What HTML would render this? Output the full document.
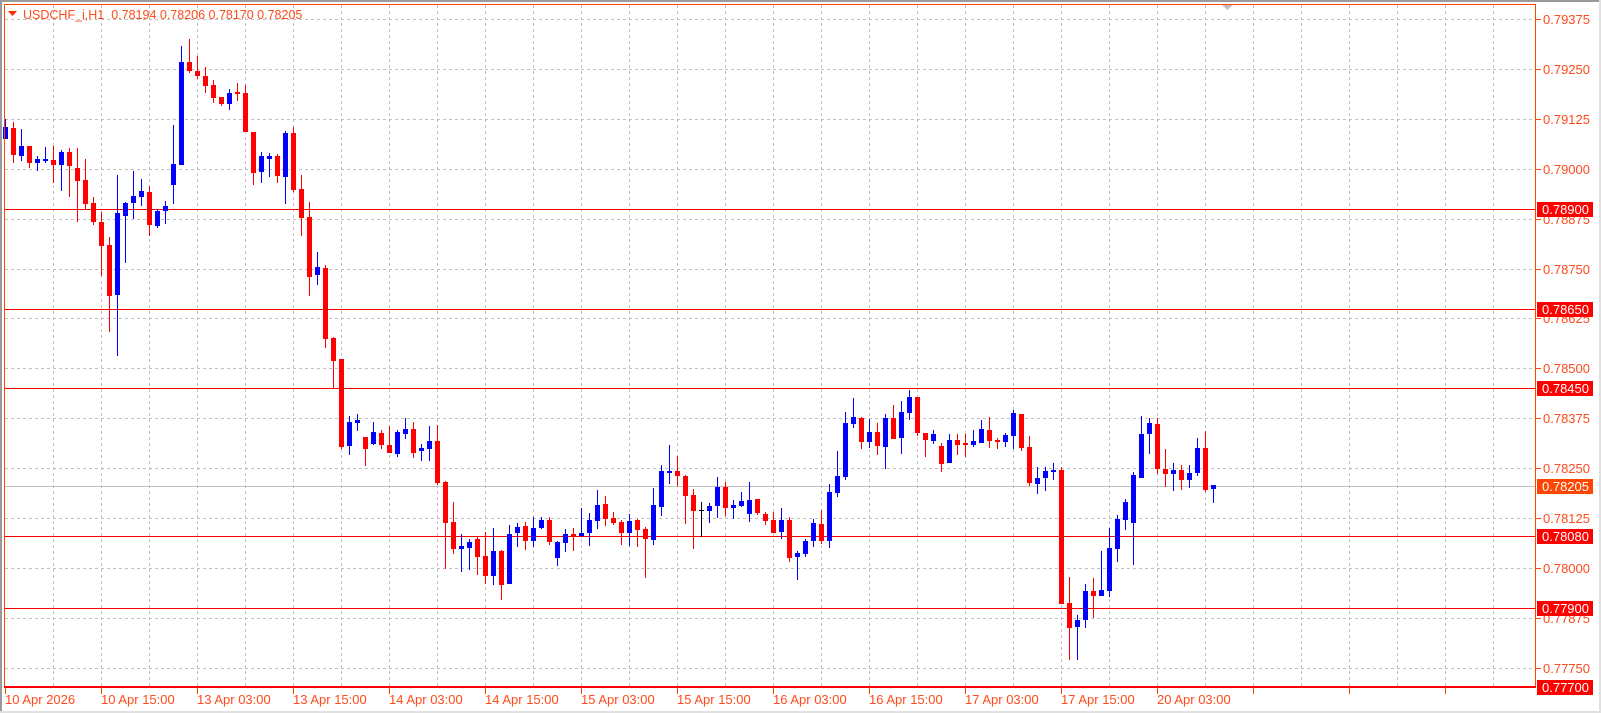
<!DOCTYPE html>
<html><head><meta charset="utf-8"><style>
html,body{margin:0;padding:0;background:#fff;width:1601px;height:713px;overflow:hidden}
svg{display:block}
text{font-family:"Liberation Sans",sans-serif}
</style></head><body>
<svg width="1601" height="713" viewBox="0 0 1601 713" xmlns="http://www.w3.org/2000/svg">
<rect x="0" y="0" width="1601" height="713" fill="#fff"/>
<rect x="0" y="0" width="1601" height="2" fill="#9a9a9a"/>
<rect x="0" y="0" width="2" height="713" fill="#9a9a9a"/>
<rect x="0" y="711" width="1601" height="2" fill="#e0e0e0"/>
<rect x="1599" y="0" width="2" height="713" fill="#e0e0e0"/>
<g stroke="#c0c0c0" stroke-width="1" stroke-dasharray="3,3" shape-rendering="crispEdges">
<path d="M53.5 5V687M101.5 5V687M149.5 5V687M197.5 5V687M245.5 5V687M293.5 5V687M341.5 5V687M389.5 5V687M437.5 5V687M485.5 5V687M533.5 5V687M581.5 5V687M629.5 5V687M677.5 5V687M725.5 5V687M773.5 5V687M821.5 5V687M869.5 5V687M917.5 5V687M965.5 5V687M1013.5 5V687M1061.5 5V687M1109.5 5V687M1157.5 5V687M1205.5 5V687M1253.5 5V687M1301.5 5V687M1349.5 5V687M1397.5 5V687M1445.5 5V687M1493.5 5V687"/>
<path d="M5 19.5H1535M5 69.5H1535M5 119.5H1535M5 169.5H1535M5 219.5H1535M5 269.5H1535M5 318.5H1535M5 368.5H1535M5 418.5H1535M5 468.5H1535M5 518.5H1535M5 568.5H1535M5 618.5H1535M5 668.5H1535"/>
</g>
<path d="M5 486.5H1535" stroke="#c0c0c0" stroke-width="1" shape-rendering="crispEdges"/>
<g stroke="#ff0000" stroke-width="1" shape-rendering="crispEdges">
<path d="M5 209.5H1535M5 309.5H1535M5 388.5H1535M5 536.5H1535M5 608.5H1535"/>
</g>
<polygon points="1222,5 1233,5 1227.5,10" fill="#c0c0c0"/>
<g fill="#0000ff" shape-rendering="crispEdges">
<rect x="3" y="127" width="5" height="12"/><rect x="5" y="119" width="1" height="20"/>
<rect x="19" y="146" width="5" height="10"/><rect x="21" y="129" width="1" height="32"/>
<rect x="35" y="159" width="5" height="4"/><rect x="37" y="156" width="1" height="15"/>
<rect x="43" y="159" width="5" height="2"/><rect x="45" y="147" width="1" height="16"/>
<rect x="59" y="152" width="5" height="13"/><rect x="61" y="150" width="1" height="41"/>
<rect x="115" y="213" width="5" height="82"/><rect x="117" y="175" width="1" height="181"/>
<rect x="123" y="203" width="5" height="13"/><rect x="125" y="202" width="1" height="61"/>
<rect x="131" y="196" width="5" height="7"/><rect x="133" y="171" width="1" height="48"/>
<rect x="139" y="191" width="5" height="6"/><rect x="141" y="179" width="1" height="27"/>
<rect x="155" y="211" width="5" height="15"/><rect x="157" y="209" width="1" height="19"/>
<rect x="163" y="206" width="5" height="5"/><rect x="165" y="201" width="1" height="23"/>
<rect x="171" y="164" width="5" height="21"/><rect x="173" y="125" width="1" height="79"/>
<rect x="179" y="62" width="5" height="103"/><rect x="181" y="46" width="1" height="119"/>
<rect x="227" y="93" width="5" height="11"/><rect x="229" y="89" width="1" height="21"/>
<rect x="259" y="156" width="5" height="16"/><rect x="261" y="152" width="1" height="31"/>
<rect x="267" y="156" width="5" height="3"/><rect x="269" y="153" width="1" height="24"/>
<rect x="283" y="133" width="5" height="44"/><rect x="285" y="131" width="1" height="73"/>
<rect x="315" y="267" width="5" height="8"/><rect x="317" y="252" width="1" height="33"/>
<rect x="347" y="422" width="5" height="24"/><rect x="349" y="416" width="1" height="39"/>
<rect x="355" y="420" width="5" height="3"/><rect x="357" y="414" width="1" height="17"/>
<rect x="371" y="432" width="5" height="12"/><rect x="373" y="422" width="1" height="23"/>
<rect x="395" y="432" width="5" height="22"/><rect x="397" y="430" width="1" height="27"/>
<rect x="403" y="429" width="5" height="5"/><rect x="405" y="418" width="1" height="21"/>
<rect x="419" y="448" width="5" height="3"/><rect x="421" y="444" width="1" height="17"/>
<rect x="427" y="441" width="5" height="8"/><rect x="429" y="426" width="1" height="35"/>
<rect x="459" y="546" width="5" height="3"/><rect x="461" y="534" width="1" height="38"/>
<rect x="467" y="542" width="5" height="6"/><rect x="469" y="539" width="1" height="31"/>
<rect x="491" y="551" width="5" height="25"/><rect x="493" y="528" width="1" height="57"/>
<rect x="507" y="534" width="5" height="50"/><rect x="509" y="525" width="1" height="59"/>
<rect x="515" y="527" width="5" height="6"/><rect x="517" y="523" width="1" height="24"/>
<rect x="531" y="528" width="5" height="13"/><rect x="533" y="517" width="1" height="30"/>
<rect x="539" y="520" width="5" height="8"/><rect x="541" y="517" width="1" height="12"/>
<rect x="555" y="542" width="5" height="16"/><rect x="557" y="541" width="1" height="25"/>
<rect x="563" y="534" width="5" height="9"/><rect x="565" y="529" width="1" height="23"/>
<rect x="579" y="533" width="5" height="3"/><rect x="581" y="508" width="1" height="29"/>
<rect x="587" y="520" width="5" height="13"/><rect x="589" y="513" width="1" height="33"/>
<rect x="595" y="505" width="5" height="16"/><rect x="597" y="490" width="1" height="39"/>
<rect x="627" y="521" width="5" height="12"/><rect x="629" y="514" width="1" height="32"/>
<rect x="651" y="505" width="5" height="35"/><rect x="653" y="488" width="1" height="57"/>
<rect x="659" y="471" width="5" height="36"/><rect x="661" y="465" width="1" height="51"/>
<rect x="667" y="471" width="5" height="2"/><rect x="669" y="445" width="1" height="39"/>
<rect x="707" y="506" width="5" height="5"/><rect x="709" y="503" width="1" height="20"/>
<rect x="715" y="487" width="5" height="19"/><rect x="717" y="477" width="1" height="41"/>
<rect x="731" y="505" width="5" height="3"/><rect x="733" y="500" width="1" height="19"/>
<rect x="739" y="501" width="5" height="5"/><rect x="741" y="492" width="1" height="15"/>
<rect x="747" y="500" width="5" height="14"/><rect x="749" y="482" width="1" height="40"/>
<rect x="779" y="520" width="5" height="12"/><rect x="781" y="508" width="1" height="31"/>
<rect x="795" y="553" width="5" height="4"/><rect x="797" y="551" width="1" height="29"/>
<rect x="803" y="541" width="5" height="13"/><rect x="805" y="539" width="1" height="18"/>
<rect x="811" y="523" width="5" height="18"/><rect x="813" y="519" width="1" height="28"/>
<rect x="827" y="492" width="5" height="49"/><rect x="829" y="484" width="1" height="64"/>
<rect x="835" y="476" width="5" height="17"/><rect x="837" y="451" width="1" height="46"/>
<rect x="843" y="423" width="5" height="54"/><rect x="845" y="412" width="1" height="68"/>
<rect x="851" y="417" width="5" height="7"/><rect x="853" y="398" width="1" height="30"/>
<rect x="867" y="432" width="5" height="10"/><rect x="869" y="419" width="1" height="29"/>
<rect x="883" y="418" width="5" height="29"/><rect x="885" y="414" width="1" height="55"/>
<rect x="899" y="412" width="5" height="26"/><rect x="901" y="401" width="1" height="53"/>
<rect x="907" y="397" width="5" height="16"/><rect x="909" y="390" width="1" height="30"/>
<rect x="931" y="434" width="5" height="7"/><rect x="933" y="430" width="1" height="14"/>
<rect x="947" y="440" width="5" height="23"/><rect x="949" y="434" width="1" height="29"/>
<rect x="971" y="441" width="5" height="4"/><rect x="973" y="430" width="1" height="17"/>
<rect x="979" y="429" width="5" height="14"/><rect x="981" y="420" width="1" height="23"/>
<rect x="1003" y="435" width="5" height="7"/><rect x="1005" y="433" width="1" height="14"/>
<rect x="1011" y="413" width="5" height="23"/><rect x="1013" y="410" width="1" height="39"/>
<rect x="1035" y="478" width="5" height="6"/><rect x="1037" y="467" width="1" height="27"/>
<rect x="1043" y="471" width="5" height="7"/><rect x="1045" y="467" width="1" height="24"/>
<rect x="1051" y="470" width="5" height="2"/><rect x="1053" y="463" width="1" height="17"/>
<rect x="1075" y="620" width="5" height="7"/><rect x="1077" y="615" width="1" height="45"/>
<rect x="1083" y="591" width="5" height="29"/><rect x="1085" y="584" width="1" height="44"/>
<rect x="1099" y="590" width="5" height="6"/><rect x="1101" y="551" width="1" height="45"/>
<rect x="1107" y="548" width="5" height="43"/><rect x="1109" y="528" width="1" height="69"/>
<rect x="1115" y="519" width="5" height="30"/><rect x="1117" y="515" width="1" height="47"/>
<rect x="1123" y="502" width="5" height="18"/><rect x="1125" y="499" width="1" height="31"/>
<rect x="1131" y="475" width="5" height="48"/><rect x="1133" y="472" width="1" height="93"/>
<rect x="1139" y="434" width="5" height="44"/><rect x="1141" y="416" width="1" height="62"/>
<rect x="1147" y="423" width="5" height="11"/><rect x="1149" y="418" width="1" height="36"/>
<rect x="1171" y="470" width="5" height="4"/><rect x="1173" y="463" width="1" height="28"/>
<rect x="1187" y="473" width="5" height="7"/><rect x="1189" y="465" width="1" height="23"/>
<rect x="1195" y="448" width="5" height="25"/><rect x="1197" y="438" width="1" height="38"/>
<rect x="1211" y="485" width="5" height="4"/><rect x="1213" y="485" width="1" height="18"/>
</g>
<g fill="#ff0000" shape-rendering="crispEdges">
<rect x="11" y="128" width="5" height="27"/><rect x="13" y="122" width="1" height="41"/>
<rect x="27" y="146" width="5" height="17"/><rect x="29" y="146" width="1" height="22"/>
<rect x="51" y="160" width="5" height="5"/><rect x="53" y="146" width="1" height="37"/>
<rect x="67" y="152" width="5" height="14"/><rect x="69" y="148" width="1" height="49"/>
<rect x="75" y="168" width="5" height="13"/><rect x="77" y="148" width="1" height="74"/>
<rect x="83" y="180" width="5" height="24"/><rect x="85" y="159" width="1" height="50"/>
<rect x="91" y="203" width="5" height="19"/><rect x="93" y="197" width="1" height="28"/>
<rect x="99" y="222" width="5" height="24"/><rect x="101" y="212" width="1" height="64"/>
<rect x="107" y="245" width="5" height="51"/><rect x="109" y="237" width="1" height="95"/>
<rect x="147" y="192" width="5" height="33"/><rect x="149" y="186" width="1" height="50"/>
<rect x="187" y="62" width="5" height="9"/><rect x="189" y="39" width="1" height="34"/>
<rect x="195" y="71" width="5" height="5"/><rect x="197" y="56" width="1" height="23"/>
<rect x="203" y="76" width="5" height="10"/><rect x="205" y="67" width="1" height="26"/>
<rect x="211" y="85" width="5" height="13"/><rect x="213" y="80" width="1" height="23"/>
<rect x="219" y="97" width="5" height="7"/><rect x="221" y="97" width="1" height="9"/>
<rect x="235" y="92" width="5" height="2"/><rect x="237" y="83" width="1" height="18"/>
<rect x="243" y="93" width="5" height="39"/><rect x="245" y="85" width="1" height="47"/>
<rect x="251" y="132" width="5" height="41"/><rect x="253" y="132" width="1" height="53"/>
<rect x="275" y="156" width="5" height="20"/><rect x="277" y="154" width="1" height="29"/>
<rect x="291" y="133" width="5" height="57"/><rect x="293" y="127" width="1" height="65"/>
<rect x="299" y="189" width="5" height="29"/><rect x="301" y="175" width="1" height="61"/>
<rect x="307" y="217" width="5" height="60"/><rect x="309" y="202" width="1" height="94"/>
<rect x="323" y="268" width="5" height="71"/><rect x="325" y="265" width="1" height="83"/>
<rect x="331" y="338" width="5" height="23"/><rect x="333" y="337" width="1" height="51"/>
<rect x="339" y="359" width="5" height="88"/><rect x="341" y="359" width="1" height="90"/>
<rect x="363" y="437" width="5" height="12"/><rect x="365" y="437" width="1" height="29"/>
<rect x="379" y="433" width="5" height="12"/><rect x="381" y="430" width="1" height="19"/>
<rect x="387" y="445" width="5" height="8"/><rect x="389" y="426" width="1" height="27"/>
<rect x="411" y="429" width="5" height="24"/><rect x="413" y="422" width="1" height="36"/>
<rect x="435" y="441" width="5" height="42"/><rect x="437" y="425" width="1" height="60"/>
<rect x="443" y="482" width="5" height="41"/><rect x="445" y="481" width="1" height="88"/>
<rect x="451" y="522" width="5" height="27"/><rect x="453" y="502" width="1" height="52"/>
<rect x="475" y="539" width="5" height="18"/><rect x="477" y="536" width="1" height="39"/>
<rect x="483" y="556" width="5" height="20"/><rect x="485" y="532" width="1" height="52"/>
<rect x="499" y="551" width="5" height="34"/><rect x="501" y="550" width="1" height="50"/>
<rect x="523" y="526" width="5" height="15"/><rect x="525" y="522" width="1" height="28"/>
<rect x="547" y="520" width="5" height="22"/><rect x="549" y="517" width="1" height="28"/>
<rect x="571" y="534" width="5" height="3"/><rect x="573" y="528" width="1" height="23"/>
<rect x="603" y="504" width="5" height="15"/><rect x="605" y="496" width="1" height="30"/>
<rect x="611" y="518" width="5" height="5"/><rect x="613" y="512" width="1" height="13"/>
<rect x="619" y="522" width="5" height="11"/><rect x="621" y="520" width="1" height="25"/>
<rect x="635" y="520" width="5" height="10"/><rect x="637" y="519" width="1" height="28"/>
<rect x="643" y="529" width="5" height="10"/><rect x="645" y="527" width="1" height="51"/>
<rect x="675" y="471" width="5" height="5"/><rect x="677" y="456" width="1" height="30"/>
<rect x="683" y="476" width="5" height="20"/><rect x="685" y="475" width="1" height="49"/>
<rect x="691" y="495" width="5" height="16"/><rect x="693" y="489" width="1" height="60"/>
<rect x="723" y="487" width="5" height="21"/><rect x="725" y="482" width="1" height="34"/>
<rect x="755" y="499" width="5" height="14"/><rect x="757" y="499" width="1" height="16"/>
<rect x="763" y="514" width="5" height="7"/><rect x="765" y="512" width="1" height="13"/>
<rect x="771" y="520" width="5" height="13"/><rect x="773" y="512" width="1" height="21"/>
<rect x="787" y="520" width="5" height="38"/><rect x="789" y="517" width="1" height="45"/>
<rect x="819" y="524" width="5" height="17"/><rect x="821" y="510" width="1" height="34"/>
<rect x="859" y="418" width="5" height="24"/><rect x="861" y="417" width="1" height="32"/>
<rect x="875" y="432" width="5" height="14"/><rect x="877" y="423" width="1" height="32"/>
<rect x="891" y="418" width="5" height="21"/><rect x="893" y="405" width="1" height="34"/>
<rect x="915" y="397" width="5" height="36"/><rect x="917" y="397" width="1" height="39"/>
<rect x="923" y="433" width="5" height="7"/><rect x="925" y="433" width="1" height="24"/>
<rect x="939" y="446" width="5" height="18"/><rect x="941" y="443" width="1" height="29"/>
<rect x="955" y="440" width="5" height="5"/><rect x="957" y="434" width="1" height="21"/>
<rect x="963" y="443" width="5" height="2"/><rect x="965" y="434" width="1" height="23"/>
<rect x="987" y="430" width="5" height="11"/><rect x="989" y="417" width="1" height="31"/>
<rect x="995" y="440" width="5" height="2"/><rect x="997" y="438" width="1" height="11"/>
<rect x="1019" y="414" width="5" height="34"/><rect x="1021" y="414" width="1" height="37"/>
<rect x="1027" y="447" width="5" height="36"/><rect x="1029" y="436" width="1" height="50"/>
<rect x="1059" y="470" width="5" height="134"/><rect x="1061" y="467" width="1" height="137"/>
<rect x="1067" y="603" width="5" height="25"/><rect x="1069" y="577" width="1" height="83"/>
<rect x="1091" y="591" width="5" height="5"/><rect x="1093" y="578" width="1" height="40"/>
<rect x="1155" y="424" width="5" height="45"/><rect x="1157" y="418" width="1" height="56"/>
<rect x="1163" y="469" width="5" height="5"/><rect x="1165" y="449" width="1" height="38"/>
<rect x="1179" y="470" width="5" height="10"/><rect x="1181" y="465" width="1" height="25"/>
<rect x="1203" y="448" width="5" height="42"/><rect x="1205" y="431" width="1" height="61"/>
</g>
<g fill="#000" shape-rendering="crispEdges">
<rect x="699" y="510" width="5" height="1"/><rect x="701" y="502" width="1" height="35"/>
</g>
<g fill="none" stroke="#ff4500" stroke-width="1" shape-rendering="crispEdges">
<path d="M4.5 687V4.5H1535.5V687"/>
</g>
<rect x="4" y="686" width="1532" height="2" fill="#ff0000"/>
<g stroke="#ff4500" stroke-width="1" shape-rendering="crispEdges">
<path d="M1536 19.5h5M1536 69.5h5M1536 119.5h5M1536 169.5h5M1536 219.5h5M1536 269.5h5M1536 318.5h5M1536 368.5h5M1536 418.5h5M1536 468.5h5M1536 518.5h5M1536 568.5h5M1536 618.5h5M1536 668.5h5"/>
<path d="M5.5 688v6M101.5 688v6M197.5 688v6M293.5 688v6M389.5 688v6M485.5 688v6M581.5 688v6M677.5 688v6M773.5 688v6M869.5 688v6M965.5 688v6M1061.5 688v6M1157.5 688v6M1253.5 688v6M1349.5 688v6M1445.5 688v6"/>
</g>
<g font-size="13" fill="#ff4a1c">
<text x="1543" y="24">0.79375</text>
<text x="1543" y="74">0.79250</text>
<text x="1543" y="124">0.79125</text>
<text x="1543" y="174">0.79000</text>
<text x="1543" y="224">0.78875</text>
<text x="1543" y="274">0.78750</text>
<text x="1543" y="323">0.78625</text>
<text x="1543" y="373">0.78500</text>
<text x="1543" y="423">0.78375</text>
<text x="1543" y="473">0.78250</text>
<text x="1543" y="523">0.78125</text>
<text x="1543" y="573">0.78000</text>
<text x="1543" y="623">0.77875</text>
<text x="1543" y="673">0.77750</text>
</g>
<g shape-rendering="crispEdges">
<rect x="1537" y="202" width="56" height="15" fill="#ff0000"/>
<rect x="1537" y="302" width="56" height="15" fill="#ff0000"/>
<rect x="1537" y="381" width="56" height="15" fill="#ff0000"/>
<rect x="1537" y="479" width="56" height="15" fill="#ff4500"/>
<rect x="1537" y="529" width="56" height="15" fill="#ff0000"/>
<rect x="1537" y="601" width="56" height="15" fill="#ff0000"/>
<rect x="1537" y="680" width="56" height="15" fill="#ff0000"/>
</g>
<g font-size="13" fill="#fff">
<text x="1542" y="214">0.78900</text>
<text x="1542" y="314">0.78650</text>
<text x="1542" y="393">0.78450</text>
<text x="1542" y="491">0.78205</text>
<text x="1542" y="541">0.78080</text>
<text x="1542" y="613">0.77900</text>
<text x="1542" y="692">0.77700</text>
</g>
<g font-size="13" fill="#ff4a1c">
<text x="5" y="704">10 Apr 2026</text>
<text x="101" y="704">10 Apr 15:00</text>
<text x="197" y="704">13 Apr 03:00</text>
<text x="293" y="704">13 Apr 15:00</text>
<text x="389" y="704">14 Apr 03:00</text>
<text x="485" y="704">14 Apr 15:00</text>
<text x="581" y="704">15 Apr 03:00</text>
<text x="677" y="704">15 Apr 15:00</text>
<text x="773" y="704">16 Apr 03:00</text>
<text x="869" y="704">16 Apr 15:00</text>
<text x="965" y="704">17 Apr 03:00</text>
<text x="1061" y="704">17 Apr 15:00</text>
<text x="1157" y="704">20 Apr 03:00</text>
</g>
<polygon points="8,11 17,11 12.5,16" fill="#ff2a00"/>
<text x="23" y="19" font-size="12.5" fill="#ff4a1c" xml:space="preserve">USDCHF_i,H1  0.78194 0.78206 0.78170 0.78205</text>
</svg>
</body></html>
